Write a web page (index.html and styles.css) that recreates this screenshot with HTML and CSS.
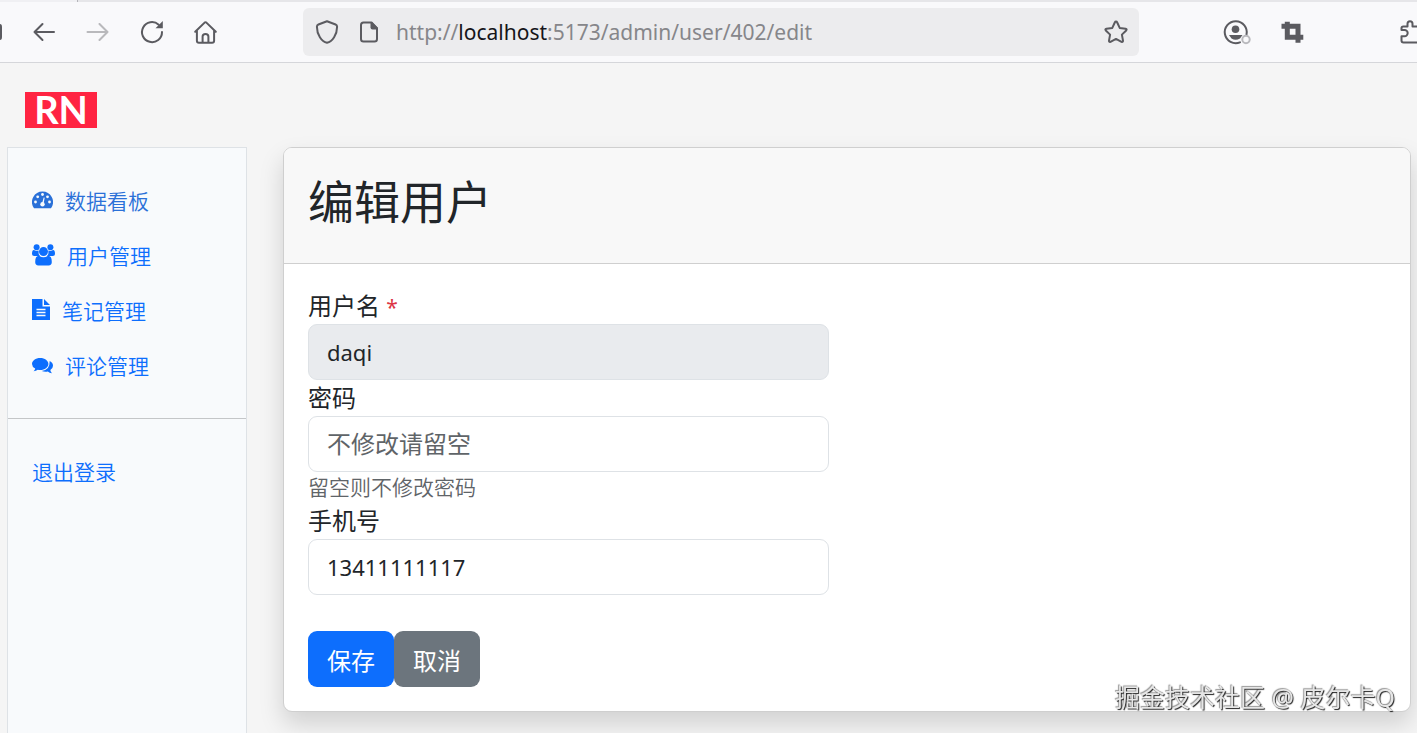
FILE: index.html
```
<!DOCTYPE html>
<html lang="zh-CN">

<head>
  <meta charset="UTF-8" />
  <meta name="viewport" content="width=device-width, initial-scale=1" />
  <title>编辑用户</title>
  <link rel="stylesheet" href="styles.css">
</head>

<body>
  <div class="tab-strip"><div class="tab-edge"></div></div>
  <div class="toolbar">
    <svg class="icon-cut" viewBox="0 0 2 24"><path d="M0 4q2 0 2 3v10q0 3-2 3z" fill="#5b5b60"/></svg>
    <button class="tool-btn" aria-label="后退">
      <svg viewBox="0 0 24 24"><path d="M22 12H2.500M10.500 4L2.500 12l8 8"/></svg>
    </button>
    <button class="tool-btn" aria-label="前进" disabled>
      <svg viewBox="0 0 24 24"><path d="M1.500 12H21M13.500 4l8 8-8 8"/></svg>
    </button>
    <button class="tool-btn" aria-label="刷新">
      <svg viewBox="0 0 24 24"><path d="M18.700 4.700A10 10 0 1 0 22 12"/><path class="solid" d="M22.800 1v7.300h-7.300z"/></svg>
    </button>
    <button class="tool-btn" aria-label="主页">
      <svg viewBox="0 0 24 24"><path d="M1.200 11.800L10.600 2.600q.9-.8 1.800 0l9.400 9.200M2.900 10.800v10q0 2 2 2h13.200q2 0 2-2v-10M8.600 22.800v-6.300q0-2.600 2.900-2.600t2.900 2.600v6.300"/></svg>
    </button>
    <div class="address">
      <svg viewBox="0 0 24 24"><path d="M11 1.200l8.600 3.300q1.500.6 1.500 2.200C21.100 14.500 16.500 21.500 11 22.800 5.500 21.500.9 14.500.9 6.700q0-1.600 1.500-2.200z"/></svg>
      <svg viewBox="0 0 24 24"><path d="M15.500 2.500H7.500q-2.500 0-2.500 2.500v14q0 2.500 2.500 2.500h11q2.500 0 2.500-2.500V8.200z"/><path class="solid" d="M14.500 2h1.500l6 6v1.500h-5.500q-2 0-2-2z"/></svg>
      <div class="url">http://<span class="host">localhost</span>:5173/admin/user/402/edit</div>
      <svg viewBox="0 0 24 24"><path d="M12 1.600q.8 0 1.200.9l2.500 5.400 5.900.8q1.700.4.600 1.800l-4.300 4.100 1.100 6q.1 1.800-1.500 1.200L12 18.900l-5.500 2.900q-1.600.6-1.500-1.200l1.100-6-4.300-4.100q-1.100-1.400.6-1.800l5.900-.8 2.500-5.400q.4-.9 1.200-.9z"/></svg>
    </div>
    <div class="extensions">
      <button class="tool-btn" aria-label="账户">
        <svg viewBox="0 0 24 24"><path d="M22.500 14.500A11 11 0 1 0 16 22.300"/><circle class="solid" cx="11.500" cy="9.300" r="3.800"/><path class="solid" d="M5 15h13.500l-2.500 3.500q-4.500 2.500-8.500 0z"/><circle class="status" cx="22" cy="19.500" r="3.700"/></svg>
      </button>
      <button class="tool-btn" aria-label="截图">
        <svg viewBox="0 0 24 24"><path class="crop" d="M1.500 6.300h16.500V22.800M7.300 1.700v15.600h16"/></svg>
      </button>
      <button class="tool-btn cut" aria-label="扩展">
        <svg viewBox="0 0 17 24"><path d="M17 22.500H3.500q-2 0-2-2v-4.200h3a3.200 3.200 0 0 0 0-6.400h-3V8q0-1.500 1.800-1.500h4.200V3.800a2.500 2.500 0 0 1 5 0v2.700H17"/></svg>
      </button>
    </div>
  </div>

  <header class="site-header">
    <a class="logo" href="#">RN</a>
  </header>

  <div class="layout">
    <aside class="sidebar">
      <nav>
        <a class="nav-item current" href="#">
          <svg width="21" height="22" viewBox="0 0 21 22" fill="currentColor">
            <path d="M10.500 2.500A10.500 10.500 0 0 0 1.700 18.700q.3.500.9.500h15.800q.6 0 .9-.5A10.500 10.500 0 0 0 10.500 2.500z"/>
            <g fill="#f8fafc"><circle cx="3.500" cy="13" r="1.400"/><circle cx="5.700" cy="7.800" r="1.400"/><circle cx="10.500" cy="5.500" r="1.400"/><circle cx="15.500" cy="7.800" r="1.400"/><circle cx="17.500" cy="13" r="1.400"/><circle cx="10.500" cy="15.200" r="2.200"/><path d="M11.700 8.500l1 .3-1.200 6.200-1.500-.4z"/></g>
          </svg>
          数据看板
        </a>
        <a class="nav-item" href="#">
          <svg width="23" height="22" viewBox="0 0 23 22" fill="currentColor">
            <circle cx="4.600" cy="3.200" r="3"/><circle cx="18.400" cy="3.200" r="3"/>
            <path d="M0 10q0-4 1.800-4l2.700.9L6.600 6.600Q6 10 8 12H2.200Q0 12 0 10zM23 10q0-4-1.800-4l-2.700.9-2.100-.3Q17 10 15 12h5.800Q23 12 23 10z"/>
            <circle cx="11.500" cy="7.600" r="4.500"/>
            <path d="M3.200 18q0-6.500 3.900-6.300 4.400 3 8.800 0 3.900-.2 3.900 6.300 0 3.400-3.200 3.400H6.400q-3.200 0-3.200-3.400z"/>
          </svg>
          用户管理
        </a>
        <a class="nav-item" href="#">
          <svg width="18" height="22" viewBox="0 0 18 22" fill="currentColor">
            <path d="M0 0h10.500v7.500H18V21H0zM12 0l6 6h-6z"/>
            <path d="M4.500 10.500h9M4.500 13.500h9M4.500 16.500h9" stroke="#f8fafc" stroke-width="1.300"/>
          </svg>
          笔记管理
        </a>
        <a class="nav-item" href="#">
          <svg width="21" height="22" viewBox="0 0 21 22" fill="currentColor">
            <path d="M8.200 4c4.600 0 8.200 2.700 8.200 6s-3.600 6-8.200 6q-1.200 0-2.400-.3-1.800 1.400-4.200 1.600 1.300-1.200 1.600-2.700Q0 12.800 0 10c0-3.300 3.600-6 8.200-6z"/>
            <path d="M17.700 7q3.300 1.600 3.300 4.700 0 2.700-2.700 4.300.3 1.800 1.700 3.200-2.500-.2-4.200-1.700-3.300.6-6.100-.6 8.200-.5 8-9.900z"/>
          </svg>
          评论管理
        </a>
      </nav>
      <hr>
      <a class="nav-item" href="#">退出登录</a>
    </aside>

    <main class="card">
      <div class="card-header">
        <h1>编辑用户</h1>
      </div>
      <form class="card-body">
        <label for="username">用户名 <span class="required">*</span></label>
        <input type="text" id="username" value="daqi" disabled>
        <label for="password">密码</label>
        <input type="password" id="password" placeholder="不修改请留空">
        <div class="help">留空则不修改密码</div>
        <label for="phone">手机号</label>
        <input type="text" id="phone" value="13411111117">
        <div class="actions">
          <button type="submit" class="btn btn-primary">保存</button>
          <button type="button" class="btn btn-secondary">取消</button>
        </div>
      </form>
    </main>
  </div>

  <div class="watermark">掘金技术社区 @ 皮尔卡Q</div>
</body>

</html>
```

FILE: styles.css
```
* {
  box-sizing: border-box;
}

body {
  margin: 0;
  min-height: 100vh;
  display: flex;
  flex-direction: column;
  font-family: "Noto Sans", "Noto Sans CJK SC", sans-serif;
  font-size: 24px;
  line-height: 36px;
  color: #212529;
  background-color: #f5f5f5;
}

/* browser bar */
.tab-strip {
  height: 2px;
  background-color: #e6e6e9;
}

.tab-edge {
  width: 78px;
  height: 2px;
  background-color: #f0f0f3;
  border-right: 1px solid #b5b5ba;
}

.toolbar {
  display: flex;
  align-items: center;
  gap: 30px;
  height: 61px;
  background-color: #f9f9fb;
  border-bottom: 1px solid #d5d6da;
}

.toolbar svg {
  display: block;
  flex: none;
  width: 24px;
  height: 24px;
  overflow: visible;
  fill: none;
  stroke: #5b5b60;
  stroke-width: 2;
  stroke-linecap: round;
  stroke-linejoin: round;
}

.toolbar .solid {
  fill: #5b5b60;
  stroke: none;
}

.toolbar .status {
  fill: #f9f9fb;
  stroke: #b9b9bd;
}

.toolbar .crop {
  stroke-width: 5;
  stroke-linecap: butt;
  stroke-linejoin: miter;
}

.toolbar .icon-cut {
  width: 2px;
  stroke: none;
}

.tool-btn {
  padding: 0;
  border: none;
  background: none;
  cursor: pointer;
}

.tool-btn:disabled {
  opacity: 0.4;
}

.address {
  flex: 1;
  display: flex;
  align-items: center;
  gap: 16px;
  height: 48px;
  margin-left: 55px;
  padding: 0 11px 0 13px;
  border-radius: 6px;
  background-color: #ececee;
}

.url {
  flex: 1;
  font-size: 21px;
  white-space: nowrap;
  color: #86868a;
}

.host {
  color: #15141a;
}

.extensions {
  display: flex;
  gap: 32px;
  width: 248px;
  padding-left: 55px;
}

.toolbar .cut {
  margin-left: auto;
}

.toolbar .cut svg {
  width: 17px;
  overflow: hidden;
}

/* page */
.site-header {
  padding: 29px 25px 19px;
}

.logo {
  display: block;
  width: 72px;
  height: 36px;
  font-family: Lato, sans-serif;
  font-size: 38px;
  font-weight: 700;
  line-height: 34px;
  text-align: center;
  text-decoration: none;
  color: white;
  background-color: #ff2442;
}

.layout {
  flex: 1;
  display: flex;
  gap: 36px;
  padding: 0 6px 0 7px;
}

.sidebar {
  width: 240px;
  flex: none;
  padding-top: 25px;
  border: 1px solid #dee2e6;
  border-bottom: none;
  background-color: #f8fafc;
}

.sidebar hr {
  margin: 25px 0;
  border: none;
  border-top: 1px solid #c4c6c8;
}

.nav-item {
  display: flex;
  align-items: center;
  gap: 12px;
  height: 55px;
  padding: 0 24px;
  font-size: 21px;
  font-weight: 350;
  color: #0d6efd;
  text-decoration: none;
}

.nav-item svg {
  margin-bottom: 2px;
}

.nav-item.current {
  color: #2a70d8;
}

.card {
  flex: 1;
  align-self: flex-start;
  border: 1px solid #cfcfcf;
  border-radius: 9px;
  background-color: white;
  box-shadow: 0 12px 24px rgba(0, 0, 0, 0.15);
}

.card-header {
  padding: 26px 24px 34px;
  border-bottom: 1px solid #cfcfcf;
  border-radius: 8px 8px 0 0;
  background-color: #f8f8f8;
}

h1 {
  margin: 0;
  font-size: 46px;
  font-weight: 400;
  line-height: 55px;
}

.card-body {
  padding: 24px;
}

label {
  display: block;
}

.required {
  font-size: 21px;
  line-height: 1;
  color: #dc3545;
}

input {
  display: block;
  width: 100%;
  max-width: 521px;
  height: 56px;
  padding: 0 18px;
  border: 1px solid #dee2e6;
  border-radius: 9px;
  font-family: inherit;
  font-size: 22px;
  color: #212529;
  background-color: white;
}

input::placeholder {
  font-size: 24px;
  color: #5f6468;
}

input:disabled {
  background-color: #e9ebee;
}

.help {
  font-size: 21px;
  font-weight: 350;
  line-height: 31px;
  color: #5f6468;
}

.actions {
  display: flex;
  margin-top: 36px;
}

.btn {
  height: 56px;
  padding: 0 19px;
  border: none;
  border-radius: 9px;
  font-family: inherit;
  font-size: 24px;
  color: white;
  cursor: pointer;
}

.btn-primary {
  background-color: #0d6efd;
}

.btn-secondary {
  background-color: #6c757d;
}

.watermark {
  position: fixed;
  right: 22px;
  bottom: 18px;
  font-size: 25px;
  color: #e6e6e6;
  text-shadow: 1px 1px 1px #222, -1px -1px 1px #999;
}
```
